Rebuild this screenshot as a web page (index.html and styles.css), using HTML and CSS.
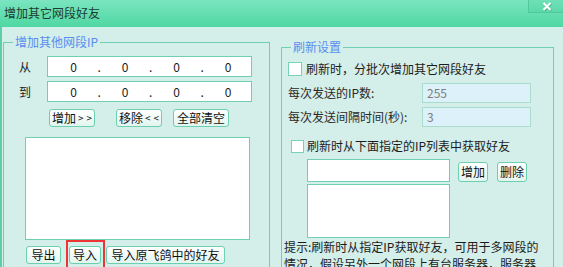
FILE: index.html
```html
<!DOCTYPE HTML>
<html>
<head>
    <meta http-equiv="Content-Type" content="text/html;charset=UTF-8">
    <title>增加其它网段好友</title>
    <link rel="stylesheet" href="styles.css">
</head>
<body>
<div class="win">
    <div class="titlebar">
        <span class="title">增加其它网段好友</span>
        <span class="close">
            <svg width="10" height="9" viewBox="0 0 10 9">
                <path d="M1.5 1 L8.5 8 M8.5 1 L1.5 8" stroke="#3aa57e" stroke-width="2.6" transform="translate(0.4,0.6)"/>
                <path d="M1.5 1 L8.5 8 M8.5 1 L1.5 8" stroke="#ffffff" stroke-width="2.2"/>
            </svg>
        </span>
    </div>
    <div class="content">
        <!-- 左边: 增加其他网段IP -->
        <fieldset class="grp grpleft">
            <legend>增加其他网段IP</legend>
            <div class="iprow first">
                <span class="iplbl">从</span>
                <div class="ipbox">
                    <span class="oct">0</span><span class="dot">.</span><span class="oct">0</span><span class="dot">.</span><span class="oct">0</span><span class="dot">.</span><span class="oct">0</span>
                </div>
            </div>
            <div class="iprow">
                <span class="iplbl">到</span>
                <div class="ipbox">
                    <span class="oct">0</span><span class="dot">.</span><span class="oct">0</span><span class="dot">.</span><span class="oct">0</span><span class="dot">.</span><span class="oct">0</span>
                </div>
            </div>
            <div class="btnrow">
                <span class="btn b-add">增加<span class="arr">&gt;&gt;</span></span>
                <span class="btn b-del">移除<span class="arr">&lt;&lt;</span></span>
                <span class="btn b-clr">全部清空</span>
            </div>
            <div class="iplist"></div>
            <div class="btmrow">
                <span class="btn b-exp">导出</span>
                <span class="mark"><span class="btn b-imp">导入</span></span>
                <span class="btn b-old">导入原飞鸽中的好友</span>
            </div>
        </fieldset>

        <!-- 右边: 刷新设置 -->
        <fieldset class="grp grpright">
            <legend>刷新设置</legend>
            <div class="chkrow c1">
                <span class="chk"></span>
                <span>刷新时，分批次增加其它网段好友</span>
            </div>
            <div class="fieldrow f1">
                <span class="flbl">每次发送的IP数:</span>
                <span class="finput">255</span>
            </div>
            <div class="fieldrow f2">
                <span class="flbl">每次发送间隔时间(秒):</span>
                <span class="finput">3</span>
            </div>
            <div class="chkrow c2">
                <span class="chk"></span>
                <span>刷新时从下面指定的IP列表中获取好友</span>
            </div>
            <div class="addrow">
                <span class="addinput"></span>
                <span class="btn b-add2">增加</span>
                <span class="btn b-del2">删除</span>
            </div>
            <div class="reflist"></div>
            <p class="hint">提示:刷新时从指定IP获取好友，可用于多网段的情况，假设另外一个网段上有台服务器，服务器的IP可以加入到上面的列表中。</p>
        </fieldset>
    </div>
</div>
</body>
</html>
```

FILE: styles.css
```css
* {
    margin: 0;
    padding: 0;
    box-sizing: border-box;
}

body {
    width: 563px;
    height: 267px;
    overflow: hidden;
    background: #d4eee9;
    font-family: "Noto Sans CJK SC", "Liberation Sans", sans-serif;
    font-size: 12px;
    line-height: 14px;
    color: #1c1c1c;
}

.win {
    width: 563px;
    height: 267px;
    overflow: hidden;
}

.titlebar {
    display: flex;
    height: 27px;
    background: linear-gradient(#7ae5c0, #4fd7a2);
}

.title {
    flex: 1;
    padding-left: 4px;
    line-height: 26px;
    font-size: 12px;
    color: #1d3b30;
}

.close {
    display: flex;
    align-items: center;
    justify-content: center;
    width: 35px;
    height: 13px;
    background: linear-gradient(#6fe0b8, #5bd9aa);
    border-left: 1px solid #52c99c;
    border-bottom: 1px solid #52c99c;
    padding-left: 2px;
}

.content {
    display: flex;
    height: 240px;
    border-left: 2px solid #5ccfa6;
}

.grp {
    border: 1px solid #6fcfb0;
    min-width: 0;
}

.grp legend {
    margin-left: 9px;
    padding: 0 2px;
    color: #5a8df0;
    line-height: 14px;
}

.grpleft {
    margin: 8px 0 0 1px;
    width: 267px;
    height: 260px;
}

.grpright {
    margin: 13px 0 0 11px;
    width: 273px;
    height: 260px;
}

/* IP 输入 */
.iprow {
    display: flex;
    height: 21px;
    margin-top: 4px;
    padding-left: 15px;
}

.iprow.first {
    margin-top: 7px;
}

.iplbl {
    width: 28px;
    line-height: 21px;
}

.ipbox {
    display: flex;
    width: 205px;
    height: 21px;
    background: #fff;
    border: 1px solid #6fcfb0;
    padding-left: 10.5px;
    line-height: 19px;
}

.oct {
    width: 30px;
    text-align: center;
}

.dot {
    width: 21.5px;
    text-align: center;
}

/* 按钮 */
.btn {
    display: inline-flex;
    align-items: center;
    justify-content: center;
    height: 18px;
    border: 1px solid #6ccfae;
    border-radius: 3px;
    background: linear-gradient(#ffffff, #e2f5ef);
    color: #111;
    white-space: nowrap;
    flex: none;
}

.arr {
    font-size: 10px;
    letter-spacing: 3px;
    margin-left: 2px;
    margin-right: -3px;
}

.btnrow {
    display: flex;
    margin-top: 7px;
    padding-left: 45px;
}

.b-add {
    width: 46px;
}

.b-del {
    width: 46px;
    margin-left: 21px;
}

.b-clr {
    width: 56px;
    margin-left: 11px;
}

.iplist {
    margin: 10px 0 0 21px;
    width: 225px;
    height: 103px;
    background: #fff;
    border: 1px solid #6fcfb0;
}

.btmrow {
    display: flex;
    align-items: flex-start;
    padding-left: 22px;
}

.b-exp {
    width: 35px;
    margin-top: 6px;
}

.mark {
    display: flex;
    margin-left: 5px;
    border: 2px solid #ee3535;
    padding: 4px 2px 6px 1px;
}

.b-imp {
    width: 32px;
}

.b-old {
    width: 119px;
    margin-top: 6px;
    margin-left: 1px;
}

/* 刷新设置 */
.chkrow {
    display: flex;
    align-items: center;
    height: 14px;
}

.chk {
    width: 14px;
    height: 14px;
    margin-right: 4px;
    background: #fff;
    border: 1px solid #78d2b4;
}

.chkrow.c1 {
    margin-top: 8px;
    padding-left: 6px;
}

.chkrow.c2 {
    margin-top: 12px;
    padding-left: 9px;
}

.c2 .chk {
    width: 13px;
    height: 13px;
    margin-right: 3px;
}

.fieldrow {
    display: flex;
    height: 20px;
    padding-left: 6px;
}

.fieldrow.f1 {
    margin-top: 7px;
}

.fieldrow.f2 {
    margin-top: 4px;
}

.flbl {
    width: 134px;
    line-height: 20px;
    color: #2a2a2a;
}

.finput {
    width: 109px;
    height: 20px;
    background: #dcf1f9;
    border: 1px solid #a8dccb;
    padding-left: 4px;
    line-height: 18px;
    color: #7d7d7d;
}

.addrow {
    display: flex;
    align-items: flex-start;
    margin-top: 6px;
    padding-left: 25px;
}

.addinput {
    width: 143px;
    height: 23px;
    background: #fff;
    border: 1px solid #6fcfb0;
}

.b-add2 {
    width: 30px;
    height: 20px;
    margin: 3px 0 0 8px;
}

.b-del2 {
    width: 30px;
    height: 20px;
    margin: 3px 0 0 9px;
}

.reflist {
    margin: 2px 0 0 25px;
    width: 143px;
    height: 54px;
    background: #fff;
    border: 1px solid #6fcfb0;
}

.hint {
    width: 258px;
    padding-left: 2px;
    line-height: 17px;
    color: #1c1c1c;
}
```
